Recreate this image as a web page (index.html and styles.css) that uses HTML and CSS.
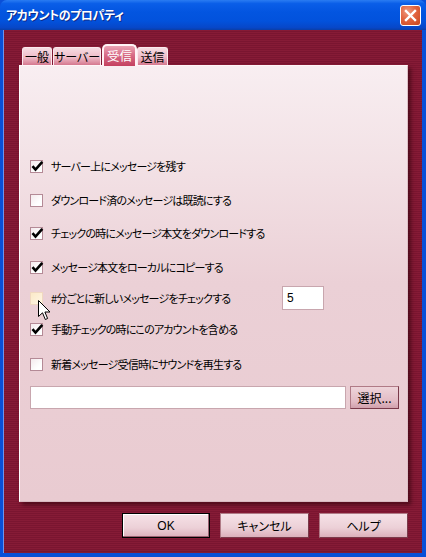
FILE: index.html
```html
<!DOCTYPE html>
<html lang="ja">
<head>
<meta charset="utf-8">
<title>アカウントのプロパティ</title>
<link rel="stylesheet" href="styles.css">
</head>
<body>
<div class="window">
  <div class="titlebar">
    <span class="title">アカウントのプロパティ</span>
    <div class="close">
      <svg width="13" height="13" viewBox="0 0 13 13"><path d="M2 2 L11 11 M11 2 L2 11" stroke="#fff" stroke-width="2.4" stroke-linecap="square"/></svg>
    </div>
  </div>
  <div class="client">
    <div class="tabs">
      <div class="tab t1">一般</div>
      <div class="tab t2">サーバー</div>
      <div class="tab t3 active">受信</div>
      <div class="tab t4">送信</div>
    </div>
    <div class="panel">
      <div class="row r1"><span class="cb"><svg viewBox="0 0 13 13"><path d="M2 6.2 L5 9.6 L11.8 1.8" fill="none" stroke="#000" stroke-width="2.6"/></svg></span><span class="lbl">サーバー上にメッセージを残す</span></div>
      <div class="row r2"><span class="cb"></span><span class="lbl">ダウンロード済のメッセージは既読にする</span></div>
      <div class="row r3"><span class="cb"><svg viewBox="0 0 13 13"><path d="M2 6.2 L5 9.6 L11.8 1.8" fill="none" stroke="#000" stroke-width="2.6"/></svg></span><span class="lbl">チェックの時にメッセージ本文をダウンロードする</span></div>
      <div class="row r4"><span class="cb"><svg viewBox="0 0 13 13"><path d="M2 6.2 L5 9.6 L11.8 1.8" fill="none" stroke="#000" stroke-width="2.6"/></svg></span><span class="lbl">メッセージ本文をローカルにコピーする</span></div>
      <div class="row r5"><span class="cb hover"></span><span class="lbl fixed">#分ごとに新しいメッセージをチェックする</span><span class="num">5</span></div>
      <div class="row r6"><span class="cb"><svg viewBox="0 0 13 13"><path d="M2 6.2 L5 9.6 L11.8 1.8" fill="none" stroke="#000" stroke-width="2.6"/></svg></span><span class="lbl">手動チェックの時にこのアカウントを含める</span></div>
      <div class="row r7"><span class="cb"></span><span class="lbl">新着メッセージ受信時にサウンドを再生する</span></div>
      <div class="filerow"><span class="field"></span><span class="btn small">選択...</span></div>
      <svg class="cursor" width="13" height="21" viewBox="0 0 13 21"><path d="M0.5 0.5 L0.5 16.5 L4.5 12.8 L7.3 19.5 L9.6 18.5 L6.9 12 L12 12 Z" fill="#fff" stroke="#000" stroke-width="1" stroke-linejoin="miter"/></svg>
    </div>
    <div class="buttons">
      <span class="btn default">OK</span>
      <span class="btn">キャンセル</span>
      <span class="btn">ヘルプ</span>
    </div>
  </div>
</div>
</body>
</html>
```
FILE: styles.css
```css
* { box-sizing: border-box; }
html, body { margin: 0; padding: 0; }
body {
  width: 426px;
  height: 557px;
  overflow: hidden;
  font-family: "Noto Sans CJK JP", "Noto Sans", sans-serif;
  font-size: 12px;
  font-feature-settings: "palt";
  color: #000;
}
.window {
  width: 426px;
  height: 557px;
  display: flex;
  flex-direction: column;
  background: #0a4fd8;
}
.titlebar {
  height: 30px;
  flex: none;
  display: flex;
  align-items: center;
  padding-left: 6px;
  border-radius: 7px 7px 0 0;
  background: linear-gradient(to bottom, #2a7cf2 0%, #0a5ee8 12%, #0355e0 40%, #0252dc 70%, #0747c8 92%, #0a3ea8 100%);
}
.title {
  color: #fff;
  font-weight: bold;
  font-size: 12px;
  letter-spacing: -0.4px;
  text-shadow: 1px 1px 0 #0d2b8a;
  margin-top: -2px;
  white-space: nowrap;
}
.close {
  margin-left: auto;
  margin-right: 5px;
  width: 21px;
  height: 21px;
  border: 1px solid #fff;
  border-radius: 3px;
  background: radial-gradient(circle at 35% 30%, #ef9a80 0%, #e2643f 45%, #c8461d 100%);
  display: flex;
  align-items: center;
  justify-content: center;
  margin-top: 1px;
}
.close svg { display: block; }
.client {
  flex: 1;
  margin: 0 4px 4px 3px;
  background: repeating-linear-gradient(to bottom, #861b36 0px, #861b36 1px, #7a1530 1px, #7a1530 2px);
  padding: 14px 14px 0 15px;
  display: flex;
  flex-direction: column;
  border-left: 1px solid #6a95ee;
}
.tabs {
  height: 21px;
  display: flex;
  align-items: flex-end;
  padding-left: 3px;
  position: relative;
  z-index: 2;
}
.tab {
  height: 18px;
  border: 1px solid #fbe9ee;
  border-bottom: none;
  border-radius: 3px 3px 0 0;
  background: linear-gradient(to bottom, #f6dce3 0%, #eebcc8 55%, #d5788f 100%);
  display: flex;
  align-items: center;
  justify-content: center;
  font-size: 12px;
  line-height: 1;
  padding-top: 1px;
  color: #000;
  margin-right: 1px;
  white-space: nowrap;
}
.t1 { width: 30px; }
.t2 { width: 48px; }
.t3 { width: 35px; margin-right: 0; }
.t4 { width: 31px; }
.tab.active {
  height: 22px;
  margin-bottom: -1px;
  border: 2px solid #fff3f6;
  border-bottom: none;
  border-radius: 5px 5px 0 0;
  background: linear-gradient(to bottom, #eaa3b4 0%, #d86c87 45%, #c4405f 100%);
  color: #fff;
  font-size: 12.5px;
}
.panel {
  height: 437px;
  flex: none;
  background: linear-gradient(to bottom, #f8eef1 0%, #f2e0e4 25%, #ebd0d6 50%, #e9cbd1 100%);
  border-left: 1px solid #ffffff;
  border-top: 1px solid #fff6f8;
  border-right: 1px solid #dcc0c6;
  border-bottom: 1px solid #d8b8c0;
  box-shadow: 3px 3px 4px rgba(40, 0, 10, 0.55);
  padding: 90px 0 0 10px;
  display: flex;
  flex-direction: column;
  position: relative;
}
.row {
  height: 20px;
  display: flex;
  align-items: center;
}
.r2 { margin-top: 14px; }
.r3 { margin-top: 13px; }
.r4 { margin-top: 14px; }
.r5 { margin-top: 9px; height: 24px; }
.r6 { margin-top: 9px; }
.r7 { margin-top: 15px; }
.cb {
  width: 13px;
  height: 13px;
  flex: none;
  border: 1px solid #b48a96;
  background: linear-gradient(135deg, #f4eaed 0%, #ffffff 70%);
  position: relative;
}
.cb svg {
  position: absolute;
  left: -1px;
  top: -1px;
  width: 14px;
  height: 13px;
}
.cb.hover {
  border-color: #f0d8c0;
  background: linear-gradient(135deg, #fbe9c8 0%, #fff6e4 100%);
}
.lbl {
  margin-left: 8px;
  font-size: 11px;
  letter-spacing: -0.8px;
  white-space: nowrap;
}
.lbl.fixed { width: 231px; }
.num {
  width: 42px;
  height: 24px;
  background: #fff;
  border: 1px solid #c8a6ae;
  padding-left: 4px;
  display: flex;
  align-items: center;
  font-family: "Liberation Sans", sans-serif;
  font-size: 12px;
}
.filerow {
  margin-top: 12px;
  display: flex;
  gap: 4px;
  height: 23px;
}
.field {
  width: 316px;
  height: 23px;
  background: #fff;
  border: 1px solid #c8a6ae;
}
.btn {
  display: flex;
  align-items: center;
  justify-content: center;
  width: 89px;
  height: 25px;
  border: 1px solid #b07a86;
  border-right-color: #7a3a4a;
  border-bottom-color: #7a3a4a;
  background: linear-gradient(to bottom, #f6e2e7 0%, #ecd0d7 60%, #dcb0bb 100%);
  font-size: 12px;
  color: #000;
}
.btn.small {
  width: 49px;
  height: 23px;
  background: linear-gradient(to bottom, #eed4da 0%, #e2bac4 70%, #d0a0ac 100%);
}
.btn.default {
  width: 88px;
  border: 1px solid #000;
  box-shadow: inset -1px -1px 0 #9a6070, inset 1px 1px 0 #fff;
  font-family: "Liberation Sans", "Noto Sans CJK JP", sans-serif;
}
.buttons {
  margin-top: 11px;
  display: flex;
  justify-content: flex-end;
  gap: 10px;
}
.cursor {
  position: absolute;
  left: 18px;
  top: 234px;
}
```
